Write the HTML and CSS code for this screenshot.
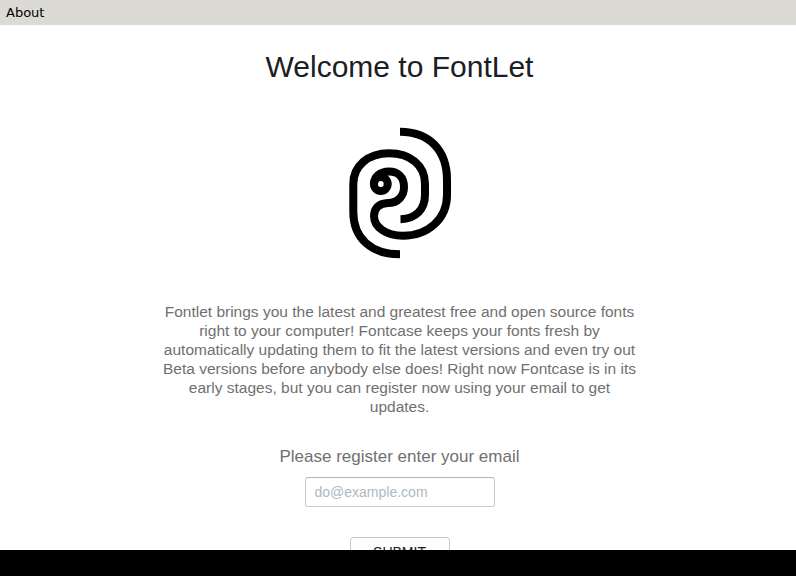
FILE: index.html
```html
<!DOCTYPE html>
<html lang="en">
<head>
<meta charset="utf-8">
<title>FontLet</title>
<link rel="stylesheet" href="styles.css">
</head>
<body>
<nav class="menubar"><span>About</span></nav>
<main class="welcome">
  <h1 class="title">Welcome to FontLet</h1>
  <svg class="logo" width="120" height="150" viewBox="0 0 120 150" fill="none" stroke="#000" stroke-width="8" aria-hidden="true">
    <path d="M60 16.7C89 16.7 107 35 107 65V80C107 104 88 120.7 63 120.7C46 120.7 34 112 34 101C34 93 39 88.3 48 88C58 88 64 81 64 72C64 62 58 56.5 49 56.5C40 56.5 34 62 34 69"/>
    <circle cx="40.8" cy="69" r="6.9"/>
    <path d="M60 139.3C31 139.3 13.3 123 13.3 97V69C13.3 51 28 38.3 49 38.3C70 38.3 85 50 85 69V80C85 94 76 104 60.5 104.2"/>
  </svg>
  <p class="intro">Fontlet brings you the latest and greatest free and open source fonts right to your computer! Fontcase keeps your fonts fresh by automatically updating them to fit the latest versions and even try out Beta versions before anybody else does! Right now Fontcase is in its early stages, but you can register now using your email to get updates.</p>
  <label class="prompt" for="email">Please register enter your email</label>
  <input class="email" id="email" type="text" placeholder="do@example.com">
  <button class="submit" type="button">SUBMIT</button>
</main>
<footer class="bottombar"></footer>
</body>
</html>
```
FILE: styles.css
```css
* { box-sizing: border-box; }
body {
  margin: 0;
  height: 576px;
  display: flex;
  flex-direction: column;
  overflow: hidden;
  background: #fff;
  font-family: "Liberation Sans", Arial, sans-serif;
}
.menubar {
  flex: none;
  height: 25px;
  padding-left: 6px;
  background: #dbdad5;
  color: #000;
  font: 13px/25px "DejaVu Sans", sans-serif;
}
.welcome {
  flex: 1;
  min-height: 0;
  overflow: hidden;
  display: flex;
  flex-direction: column;
  align-items: center;
  padding: 24px 0 0 4px;
}
.welcome > * { flex: none; }
.title {
  margin: 0;
  padding-right: 1px;
  color: #192024;
  font-size: 30px;
  font-weight: 400;
  line-height: 36px;
}
.logo { margin: 30px 0 37px; }
.intro {
  width: 480px;
  margin: 0;
  padding-right: 1px;
  color: #707070;
  font-size: 15.5px;
  line-height: 19px;
  text-align: center;
}
.prompt {
  margin-top: 31px;
  padding-right: 1px;
  color: #707070;
  font-size: 17px;
  line-height: 20px;
}
.email {
  width: 190px;
  height: 30px;
  margin-top: 10px;
  padding: 0 8.5px;
  border: 1px solid #ccc;
  border-top-color: #b5b5b5;
  border-radius: 3px;
  background: #fff;
  font: 14px "Liberation Sans", Arial, sans-serif;
}
.email::placeholder { color: #aeb9c2; opacity: 1; }
.submit {
  width: 100px;
  height: 30px;
  margin-top: 30px;
  padding: 0 1px 0 0;
  border: 1px solid #c8c8c8;
  border-radius: 3px;
  background: #fbfcfd;
  color: #192024;
  font: 14px "Liberation Sans", Arial, sans-serif;
}
.bottombar {
  flex: none;
  height: 26px;
  background: #000;
}
```
